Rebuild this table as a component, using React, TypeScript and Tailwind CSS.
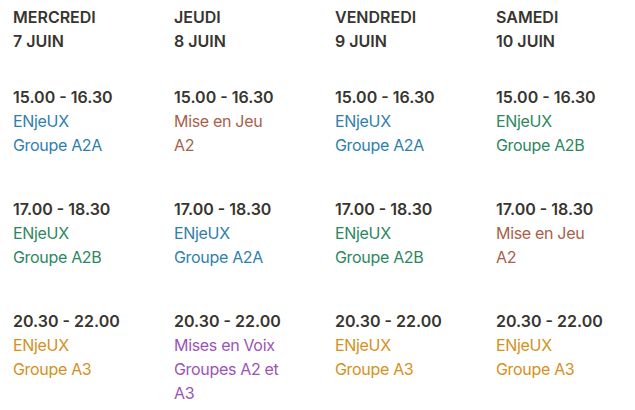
const COLORS = {
  blue: 'text-[#2f80ad]',
  brown: 'text-[#a8614a]',
  green: 'text-[#2d8760]',
  yellow: 'text-[#d4911c]',
  purple: 'text-[#9a54b5]',
} as const;

type Slot = { time: string; title: string; group: string; color: keyof typeof COLORS };

const days: { day: string; date: string; slots: Slot[] }[] = [
  {
    day: 'MERCREDI',
    date: '7 JUIN',
    slots: [
      { time: '15.00 - 16.30', title: 'ENjeUX', group: 'Groupe A2A', color: 'blue' },
      { time: '17.00 - 18.30', title: 'ENjeUX', group: 'Groupe A2B', color: 'green' },
      { time: '20.30 - 22.00', title: 'ENjeUX', group: 'Groupe A3', color: 'yellow' },
    ],
  },
  {
    day: 'JEUDI',
    date: '8 JUIN',
    slots: [
      { time: '15.00 - 16.30', title: 'Mise en Jeu', group: 'A2', color: 'brown' },
      { time: '17.00 - 18.30', title: 'ENjeUX', group: 'Groupe A2A', color: 'blue' },
      { time: '20.30 - 22.00', title: 'Mises en Voix', group: 'Groupes A2 et A3', color: 'purple' },
    ],
  },
  {
    day: 'VENDREDI',
    date: '9 JUIN',
    slots: [
      { time: '15.00 - 16.30', title: 'ENjeUX', group: 'Groupe A2A', color: 'blue' },
      { time: '17.00 - 18.30', title: 'ENjeUX', group: 'Groupe A2B', color: 'green' },
      { time: '20.30 - 22.00', title: 'ENjeUX', group: 'Groupe A3', color: 'yellow' },
    ],
  },
  {
    day: 'SAMEDI',
    date: '10 JUIN',
    slots: [
      { time: '15.00 - 16.30', title: 'ENjeUX', group: 'Groupe A2B', color: 'green' },
      { time: '17.00 - 18.30', title: 'Mise en Jeu', group: 'A2', color: 'brown' },
      { time: '20.30 - 22.00', title: 'ENjeUX', group: 'Groupe A3', color: 'yellow' },
    ],
  },
];

export default function App() {
  return (
    <div
      className="min-h-[410px] w-[635px] bg-white pl-[13px] pt-[5px] text-[16px] leading-[24px] text-[#37352f]"
      style={{ fontFamily: 'Inter, "Noto Sans", sans-serif' }}
    >
      <div className="grid grid-cols-[161px_161px_161px_1fr]">
        {days.map((d) => (
          <div key={d.day} className="flex flex-col">
            <div className="font-semibold">
              <div>{d.day}</div>
              <div>{d.date}</div>
            </div>
            <div className="mt-[32px] flex flex-col gap-[40px]">
              {d.slots.map((s) => (
                <div key={s.time} className="min-h-[72px] w-[120px]">
                  <div className="font-semibold whitespace-nowrap">{s.time}</div>
                  <div className={`${COLORS[s.color]} tracking-[-0.02em]`}>{s.title}</div>
                  <div className={`${COLORS[s.color]} tracking-[-0.02em]`}>{s.group}</div>
                </div>
              ))}
            </div>
          </div>
        ))}
      </div>
    </div>
  );
}
